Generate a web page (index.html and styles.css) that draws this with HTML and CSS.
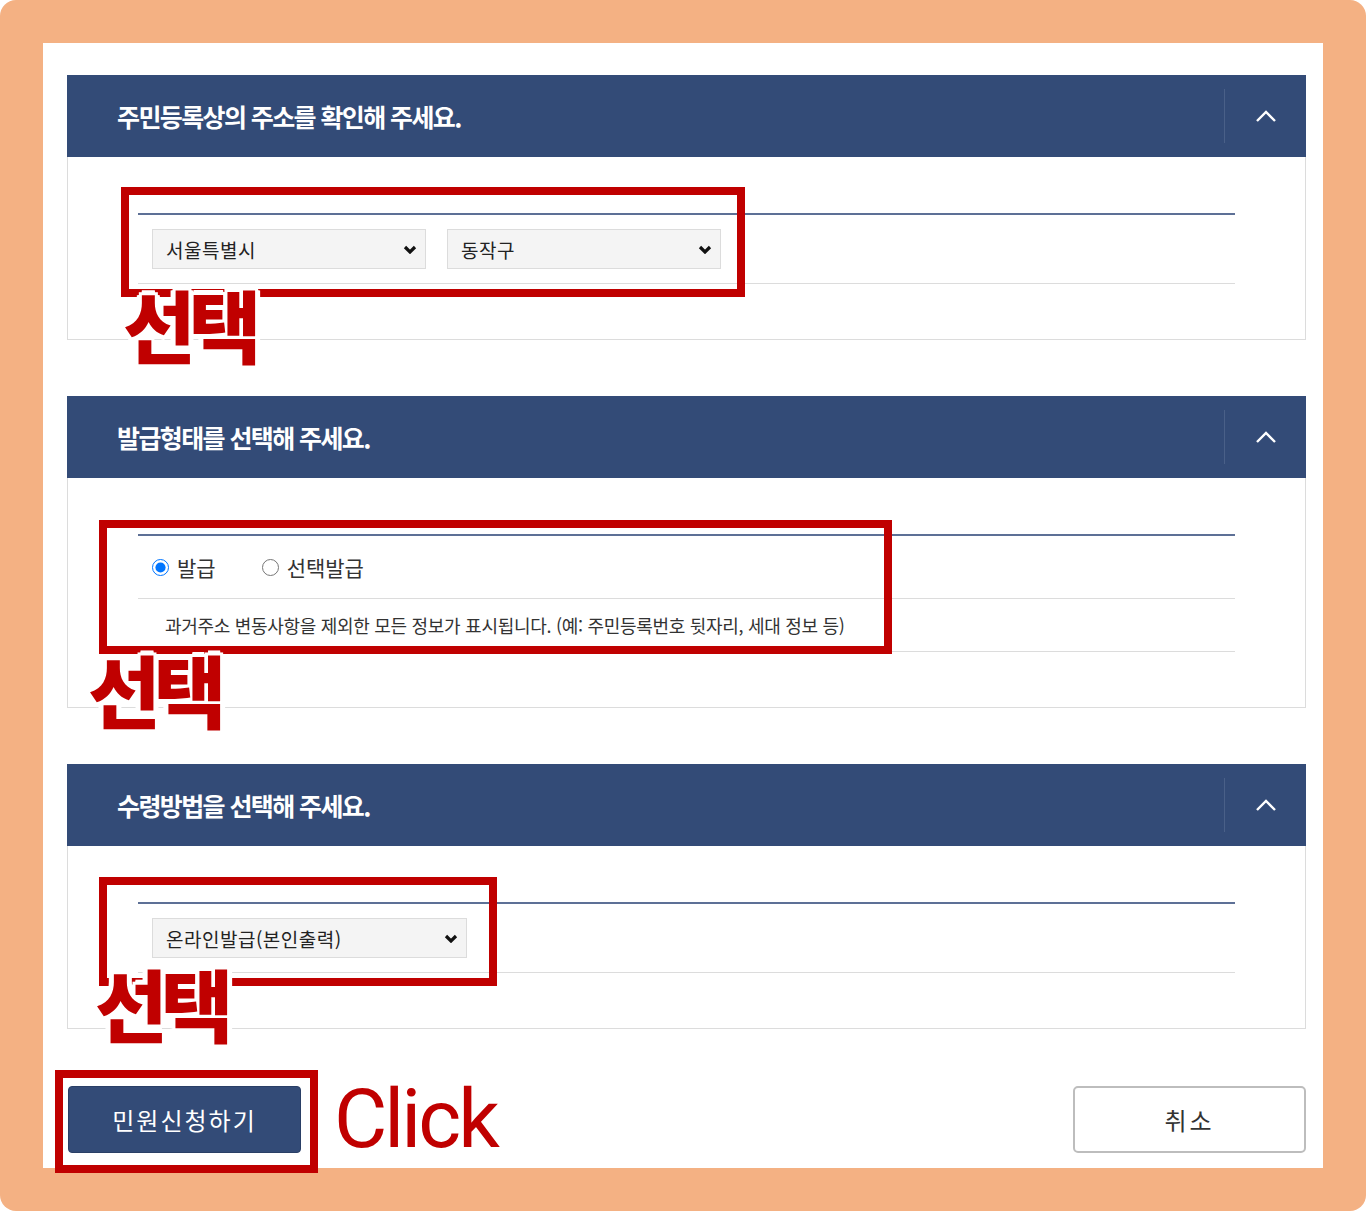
FILE: index.html
```html
<!DOCTYPE html>
<html lang="ko">
<head>
    <meta charset="UTF-8">
    <meta name="viewport" content="width=device-width, initial-scale=1.0">
    <title>민원신청</title>
    <link rel="stylesheet" href="styles.css">
</head>
<body>
    <div class="frame">
        <div class="panel">
            <section class="step">
                <div class="step-head">
                    <h3>주민등록상의 주소를 확인해 주세요.</h3>
                    <span class="fold"><svg width="22" height="12" viewBox="0 0 22 12"><polyline points="2,11 11,2 20,11" fill="none" stroke="#fff" stroke-width="2.4"/></svg></span>
                </div>
                <div class="step-body">
                    <div class="form-table">
                        <div class="form-row row-select">
                            <div class="select w-half"><span>서울특별시</span><svg width="14" height="9" viewBox="0 0 14 9"><polyline points="2,2 7,7 12,2" fill="none" stroke="#111" stroke-width="3.2"/></svg></div>
                            <div class="select w-half"><span>동작구</span><svg width="14" height="9" viewBox="0 0 14 9"><polyline points="2,2 7,7 12,2" fill="none" stroke="#111" stroke-width="3.2"/></svg></div>
                        </div>
                    </div>
                    <div class="mark mark-1"></div>
                    <span class="pick pick-1">선택</span>
                </div>
            </section>

            <section class="step">
                <div class="step-head">
                    <h3>발급형태를 선택해 주세요.</h3>
                    <span class="fold"><svg width="22" height="12" viewBox="0 0 22 12"><polyline points="2,11 11,2 20,11" fill="none" stroke="#fff" stroke-width="2.4"/></svg></span>
                </div>
                <div class="step-body">
                    <div class="form-table">
                        <div class="form-row row-radio">
                            <label class="radio"><input type="radio" name="kind" checked> 발급</label>
                            <label class="radio"><input type="radio" name="kind"> 선택발급</label>
                        </div>
                        <div class="form-row row-desc">
                            과거주소 변동사항을 제외한 모든 정보가 표시됩니다. (예: 주민등록번호 뒷자리, 세대 정보 등)
                        </div>
                    </div>
                    <div class="mark mark-2"></div>
                    <span class="pick pick-2">선택</span>
                </div>
            </section>

            <section class="step">
                <div class="step-head">
                    <h3>수령방법을 선택해 주세요.</h3>
                    <span class="fold"><svg width="22" height="12" viewBox="0 0 22 12"><polyline points="2,11 11,2 20,11" fill="none" stroke="#fff" stroke-width="2.4"/></svg></span>
                </div>
                <div class="step-body">
                    <div class="form-table">
                        <div class="form-row row-select">
                            <div class="select w-wide"><span>온라인발급(본인출력)</span><svg width="14" height="9" viewBox="0 0 14 9"><polyline points="2,2 7,7 12,2" fill="none" stroke="#111" stroke-width="3.2"/></svg></div>
                        </div>
                    </div>
                    <div class="mark mark-3"></div>
                    <span class="pick pick-3">선택</span>
                </div>
            </section>

            <div class="actions">
                <div class="submit-wrap">
                    <button class="btn-submit">민원신청하기</button>
                    <div class="mark mark-btn"></div>
                </div>
                <span class="click">Click</span>
                <button class="btn-cancel">취소</button>
            </div>
        </div>
    </div>
</body>
</html>
```

FILE: styles.css
```css
body {
    margin: 0;
    background-color: #fff;
    font-family: "Noto Sans CJK KR", "Noto Sans", sans-serif;
    color: #333;
}
.frame {
    width: 1366px;
    height: 1211px;
    box-sizing: border-box;
    padding: 43px;
    background-color: #f4b183;
    border-radius: 16px;
}
.panel {
    height: 1125px;
    box-sizing: border-box;
    padding: 32px 17px 0 24px;
    background-color: #fff;
}
.step {
    margin-bottom: 56px;
}
.step-head {
    display: flex;
    align-items: center;
    justify-content: space-between;
    height: 82px;
    background-color: #334b77;
}
.step-head h3 {
    margin: 0;
    padding-left: 50px;
    color: #fff;
    font-size: 25px;
    font-weight: 700;
    letter-spacing: -1.6px;
}
.fold {
    display: flex;
    align-items: center;
    justify-content: center;
    width: 81px;
    height: 54px;
    border-left: 1px solid #4a6088;
}
.step-body {
    position: relative;
    padding: 56px 70px 55px 70px;
    border: 1px solid #dcdcdc;
    border-top: none;
}
.form-table {
    border-top: 2px solid #5d7096;
}
.form-row {
    border-bottom: 1px solid #dcdcdc;
}
.row-select {
    display: flex;
    gap: 21px;
    padding: 14px;
}
.select {
    display: flex;
    align-items: center;
    justify-content: space-between;
    height: 40px;
    box-sizing: border-box;
    padding: 0 8px 0 13px;
    background-color: #f4f4f4;
    border: 1px solid #dcdcdc;
    font-size: 19px;
    letter-spacing: 0.5px;
    color: #222;
}
.w-half {
    width: 274px;
}
.w-wide {
    width: 315px;
}
.row-radio {
    display: flex;
    align-items: center;
    gap: 46px;
    height: 62px;
    padding-left: 14px;
}
.radio {
    display: flex;
    align-items: center;
    gap: 8px;
    font-size: 21px;
    color: #333;
}
.radio input {
    width: 17px;
    height: 17px;
    margin: 0;
}
.row-desc {
    display: flex;
    align-items: center;
    height: 52px;
    padding-left: 27px;
    font-size: 18px;
    letter-spacing: -0.3px;
    color: #333;
}
.mark {
    position: absolute;
    box-sizing: border-box;
    border: 8px solid #c00000;
}
.mark-1 {
    left: 53px;
    top: 30px;
    width: 624px;
    height: 110px;
}
.mark-2 {
    left: 31px;
    top: 42px;
    width: 793px;
    height: 134px;
}
.mark-3 {
    left: 31px;
    top: 31px;
    width: 398px;
    height: 109px;
}
.pick {
    position: absolute;
    z-index: 2;
    font-size: 79px;
    font-weight: 900;
    line-height: 1;
    letter-spacing: -7px;
    color: #c00000;
    text-shadow: 4px 0 #fff, -4px 0 #fff, 0 4px #fff, 0 -4px #fff,
        3px 3px #fff, -3px 3px #fff, 3px -3px #fff, -3px -3px #fff,
        5px 0 #fff, -5px 0 #fff, 0 5px #fff, 0 -5px #fff;
}
.pick-1 {
    left: 55px;
    top: 127px;
}
.pick-2 {
    left: 20px;
    top: 171px;
}
.pick-3 {
    left: 27px;
    top: 117px;
}
.actions {
    display: flex;
    align-items: center;
    margin-top: 57px;
}
.submit-wrap {
    position: relative;
    margin-left: 1px;
}
.btn-submit {
    display: block;
    width: 233px;
    height: 67px;
    background-color: #334b77;
    border: 1px solid #2a3f66;
    border-radius: 4px;
    color: #fff;
    font-family: inherit;
    font-size: 24px;
    letter-spacing: 2px;
}
.mark-btn {
    left: -13px;
    top: -16px;
    width: 263px;
    height: 103px;
}
.click {
    margin-left: 33px;
    font-family: Roboto, "Liberation Sans", sans-serif;
    font-size: 82px;
    line-height: 67px;
    letter-spacing: -3px;
    color: #c00000;
}
.btn-cancel {
    margin-left: auto;
    width: 233px;
    height: 67px;
    background-color: #fff;
    border: 2px solid #bdbdbd;
    border-radius: 5px;
    color: #333;
    font-family: inherit;
    font-size: 24px;
    letter-spacing: 3px;
}
```
